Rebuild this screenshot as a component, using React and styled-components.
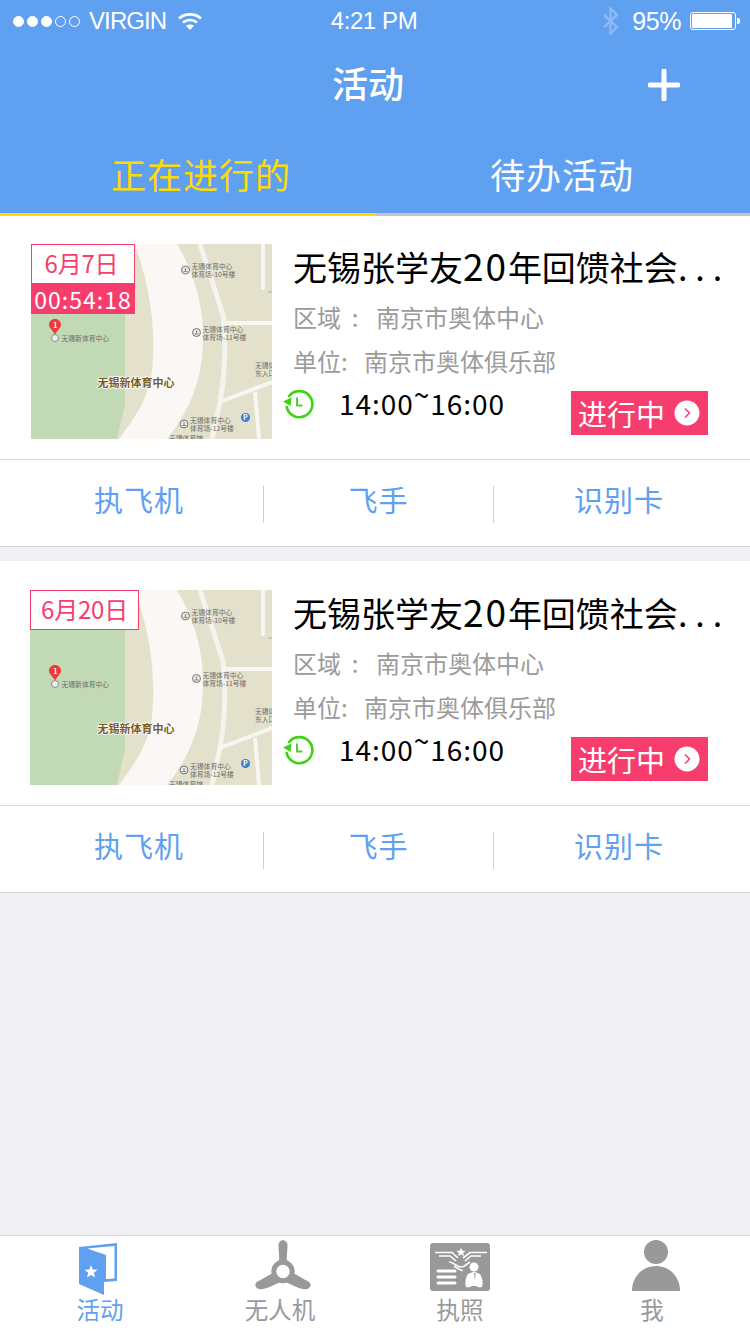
import React from "react";
import styled, { createGlobalStyle } from "styled-components";

const CJK = `"Noto Sans CJK SC", "Liberation Sans", sans-serif`;
const Global = createGlobalStyle`
  html, body { margin: 0; padding: 0; background: #efeff4; }
  body { font-family: ${CJK}; }
`;
const Page = styled.div`
  width: 750px; height: 1334px; display: flex; flex-direction: column; background: #efeff4; overflow: hidden;
`;
const Header = styled.header`
  background: #5fa0f1; height: 213px; display: flex; flex-direction: column; color: #fff;
`;
const StatusBar = styled.div`
  height: 42px; display: grid; grid-template-columns: 1fr auto 1fr; align-items: center; padding: 0 14px 0 13px;
  font: 25px/42px "Liberation Sans", sans-serif;
`;
const StatusLeft = styled.div`display: flex; align-items: center;`;
const StatusRight = styled.div`display: flex; align-items: center; justify-content: flex-end;`;
const Dots = styled.div`display: flex; gap: 3px; margin-right: 9px;`;
const Dot = styled.span`
  width: 11px; height: 11px; border-radius: 50%; box-sizing: border-box; border: 1px solid #fff;
  background: ${p => (p.$on ? "#fff" : "transparent")};
`;
const Carrier = styled.span`margin-right: 12px; font-size: 24px; letter-spacing: -.9px;`;
const Clock = styled.span`font-size: 24px; letter-spacing: -.4px; margin-right: 1px;`;
const Percent = styled.span`margin: 0 9px 0 11px; font-size: 25px; letter-spacing: -.4px;`;
const Battery = styled.div`
  width: 46px; height: 18px; border: 1px solid #fff; border-radius: 3px; box-sizing: border-box; padding: 1px; position: relative;
  &::after { content: ""; position: absolute; right: -5px; top: 5px; width: 3px; height: 6px; background: #fff; border-radius: 0 2px 2px 0; }
`;
const BatteryFill = styled.div`height: 100%; background: #fff; border-radius: 1px; width: 95%;`;
const NavBar = styled.div`
  height: 84px; position: relative; display: flex; align-items: center; justify-content: center;
  font-size: 36px; font-weight: 500; line-height: 80px; padding: 0 14px 4px 0; box-sizing: border-box;
`;
const Plus = styled.svg`position: absolute; right: 70px; top: 27px;`;
const Tabs = styled.nav`display: grid; grid-template-columns: 402px 1fr; height: 87px;`;
const Tab = styled.div`
  display: flex; justify-content: center; align-items: center; font-size: 35px; padding: 8px ${p => p.$pr || 0}px 0 0; box-sizing: border-box;
  color: ${p => (p.$active ? "#fbdc04" : "#fff")}; letter-spacing: 1px;
`;
const Indicator = styled.div`height: 3px; display: flex; background: #c6c6c8;`;
const IndicatorOn = styled.div`width: 376px; background: #fbdc04;`;
const List = styled.main`flex: 1; display: flex; flex-direction: column; gap: 14px;`;
const Card = styled.article`background: #fff; border-bottom: 1px solid #d2d2d2;`;
const CardBody = styled.div`
  height: ${p => 216 + p.$top}px; box-sizing: border-box; padding: ${p => p.$top}px 0 0 ${p => p.$left}px; display: flex; border-bottom: 1px solid #d6d6d6;
`;
const MapWrap = styled.div`position: relative; height: 195px; width: ${p => 272 - p.$left}px; flex: none; overflow: hidden;`;
const DateBadge = styled.div`
  position: absolute; left: 0; top: 0; display: flex; flex-direction: column; width: ${p => p.$w}px;
`;
const DateText = styled.div`
  height: 40px; box-sizing: border-box; border: 1px solid #f73d6e; background: #fff; color: #f73d6e; font-size: 24px; line-height: 36px;
  text-align: center; padding-right: ${p => p.$pr || 0}px; letter-spacing: -.2px;
`;
const Countdown = styled.div`
  height: 30px; background: #f73d6e; color: #fff; font: 23px/30px "Noto Sans CJK SC", sans-serif; letter-spacing: 1px; text-align: center; white-space: nowrap;
`;
const Info = styled.div`flex: 1; min-width: 0; padding-left: 21px; position: relative;`;
const Title = styled.h2`
  margin: -4px 0 0; height: 55px; font-size: 34px; font-weight: 400; color: #000; line-height: 50px; white-space: nowrap;
`;
const Digits = styled.span`font-size: 37px; letter-spacing: 1.9px;`;
const Ellipsis = styled.span`letter-spacing: 8px;`;
const Meta = styled.div`
  font-size: 24px; color: #9b9b9b; line-height: 44px; white-space: pre;
`;
const MetaLabel = styled.span`display: inline-block; width: ${p => p.$w}px;`;
const TimeRow = styled.div`display: flex; align-items: center; height: 44px; margin: -2px 0 0 -11px;`;
const TimeText = styled.span`
  font-size: 28px; line-height: 44px; color: #000; margin-left: 25px; letter-spacing: .95px; white-space: nowrap;
`;
const Tilde = styled.span`position: relative; top: -9px;`;
const StatusBadge = styled.div`
  position: absolute; left: 299px; top: 147px; width: 137px; height: 44px; background: #f73d6e; color: #fff; display: flex; align-items: center;
  padding-left: 7px; box-sizing: border-box; font-size: 29px; line-height: 42px; gap: 9px;
`;
const Go = styled.svg`flex: none;`;
const Actions = styled.div`display: grid; grid-template-columns: 263px 1px 229px 1px 1fr; height: 86px; align-items: center;`;
const Action = styled.div`
  color: #5fa0f1; font-size: 29px; text-align: center; letter-spacing: 1px; padding: 0 ${p => p.$pr || 0}px 8px ${p => p.$pl || 0}px; line-height: 76px;
`;
const Sep = styled.div`height: 37px; margin-top: 2px; background: #cfcfcf;`;
const TabBar = styled.footer`
  height: 99px; background: #fff; border-top: 1px solid #d8d8d8; display: grid; grid-template-columns: 200px 160px 200px 184px; box-sizing: border-box;
`;
const TabItem = styled.div`
  display: flex; flex-direction: column; align-items: center; padding-top: 4px; color: ${p => (p.$active ? "#5fa0f1" : "#999")};
`;
const TabIconBox = styled.div`
  height: 54px; box-sizing: border-box; display: flex; align-items: flex-start; justify-content: center;
  margin-left: ${p => p.$ml || 0}px; padding-top: ${p => p.$pt || 0}px;
`;
const TabLabel = styled.div`font-size: 23.5px; line-height: 30px;`;

const Wifi = () => (
  <svg width="24" height="18" viewBox="0 0 24 18" fill="none" stroke="#fff" strokeWidth="2.6">
    <path d="M1 6.5C7 1 17 1 23 6.5" />
    <path d="M5 10.5c4-3.4 10-3.4 14 0" />
    <path d="M12 18l-4-4.3c2.3-1.7 5.7-1.700 8 0z" fill="#fff" stroke="none" />
  </svg>
);
const Bluetooth = () => (
  <svg width="20" height="28" viewBox="0 0 20 28" fill="none" stroke="#8fbaf2" strokeWidth="2.4">
    <path d="M3 8l13 12-6.5 6.5V1.500L16 8 3 20" />
  </svg>
);
const Poi = ({ x, y, a, b }) => (
  <g>
    <circle cx={x} cy={y} r="4" fill="#e6e6e0" stroke="#777" strokeWidth="1" />
    <path d={`M${x - 2} ${y + 1.5}h4M${x} ${y - 2}v3`} stroke="#777" strokeWidth=".8" />
    <text x={x + 6} y={y - 1} fontSize="6.800" fill="#6a6a6a" fontFamily={CJK}>{a}</text>
    <text x={x + 6} y={y + 7} fontSize="6.800" fill="#6a6a6a" fontFamily={CJK}>{b}</text>
  </g>
);
const MapPicture = ({ offset }) => (
  <svg width={241 + offset} height="195" viewBox={`${-offset} 0 ${241 + offset} 195`} style={{ display: "block" }}>
    <rect x={-offset} width={241 + offset} height="195" fill="#e3e1cc" />
    <path d={`M${-offset} 0H94V160L86 195H${-offset}z`} fill="#c1dab5" />
    <path d="M104 0H146C165 32 176 72 171 112C168 148 150 178 136 195H88C108 168 122 148 122 110C124 62 112 25 104 0z" fill="#faf7f4" />
    <path d="M169 0L192 71C195 100 195 125 189 158L181 195" fill="none" stroke="#f4f3ee" strokeWidth="5" />
    <path d="M192 79H241M189 158L241 138M224 148L228 195" fill="none" stroke="#f6f6f2" strokeWidth="4" />
    <path d="M232 0V44" fill="none" stroke="#f6f6f2" strokeWidth="4" strokeLinecap="round" />
    <path d="M237 48h4" stroke="#aaa" strokeWidth="1" />
    <Poi x={154.500} y={26} a="无锡体育中心" b="体育场-10号楼" />
    <Poi x={165.500} y={88.500} a="无锡体育中心" b="体育场-11号楼" />
    <Poi x={153} y={180} a="无锡体育中心" b="体育场-12号楼" />
    <text x={224} y={124} fontSize="6.800" fill="#6a6a6a" fontFamily={CJK}>无锡体</text>
    <text x={224} y={132} fontSize="6.800" fill="#6a6a6a" fontFamily={CJK}>东入口</text>
    <circle cx="214.500" cy="173.500" r="4.500" fill="#3d7fd0" />
    <text x="212" y="176" fontSize="7" fontWeight="700" fill="#fff" fontFamily={CJK}>P</text>
    <text x={138} y={197} fontSize="6.800" fill="#6a6a6a" fontFamily={CJK}>无锡体育馆</text>
    <text x={66.500} y={143} fontSize="11" fontWeight="700" fill="#7a5a1e" stroke="#fff" strokeWidth="1.500" paintOrder="stroke" fontFamily={CJK}>无锡新体育中心</text>
    <path d="M24 75c-3.400 0-6 2.500-6 5.800 0 3.600 4.300 5.700 6 10.200 1.700-4.500 6-6.600 6-10.200 0-3.300-2.600-5.800-6-5.800z" fill="#ee3a3a" />
    <text x="22.200" y="83.500" fontSize="7" fontWeight="700" fill="#fff" fontFamily={CJK}>1</text>
    <circle cx="24" cy="94" r="3.500" fill="#eee" stroke="#777" strokeWidth=".8" />
    <text x={30.500} y={96.500} fontSize="6.800" fill="#6a6a6a" fontFamily={CJK}>无锡新体育中心</text>
  </svg>
);
const ClockBack = () => (
  <svg width="32" height="32" viewBox="0 0 32 32" fill="none">
    <path d="M6.500 10A13 13 0 1 1 4.500 19" stroke="#3ed315" strokeWidth="2.600" />
    <path d="M1 14.500L9.500 10.500L8.500 19z" fill="#3ed315" />
    <path d="M15 10.500V18.500H20.500" stroke="#58c83c" strokeWidth="2" />
  </svg>
);
const GoIcon = () => (
  <Go width="26" height="26" viewBox="0 0 26 26">
    <circle cx="13" cy="13" r="12.500" fill="#fff" />
    <path d="M11 8.500L15.500 13L11 17.500" fill="none" stroke="#f73d6e" strokeWidth="1.500" />
  </Go>
);
const DoorIcon = () => (
  <svg width="38" height="52" viewBox="0 0 38 52">
    <path fillRule="evenodd" d="M0 4L38 0V38L25 39V52L0 41zM8 5.500L27 12V36L35.500 35.500V3z" fill="#5fa0f1" />
    <path d="M12 22l1.800 4.500 4.700.3-3.600 3 1.200 4.700-4.100-2.600-4 2.600 1.200-4.700-3.700-3 4.800-.3z" fill="#fff" />
  </svg>
);
const FanIcon = () => (
  <svg width="58" height="52" viewBox="0 0 58 52" fill="#999">
    <path d="M23.500 5c0-6.500 9-6.500 9 0 0 6-1 10-.5 16h-8c.5-6-.5-10-.5-16z" />
    <path d="M19 33C13 35 8 39 3.500 41 0 42.500-1 46 2.500 48.500c5 3 15-3 22-6z" />
    <path d="M37 33c6 2 11 6 15.500 8 3.500 1.500 4.500 5 1 7.500-5 3-15-3-22-6z" />
    <circle cx="28" cy="31.500" r="9.200" fill="#fff" stroke="#999" strokeWidth="5" />
  </svg>
);
const LicenseIcon = () => (
  <svg width="60" height="48" viewBox="0 0 60 48">
    <rect width="60" height="48" rx="3" fill="#999" />
    <path d="M31 4.500l1.300 3.200 3.500.1-2.700 2.100 1 3.400-3.100-2-3 2 1-3.400-2.700-2.100 3.500-.1z" fill="#fff" />
    <g fill="none" stroke="#fff" strokeWidth="1.600">
      <path d="M5 9.500H22L28 15" /><path d="M9 13H20L26 18" /><path d="M57 9.500H40L33 15" /><path d="M51 13H41L35 18" />
      <path d="M19 19c5 0 7 5 12 5 5 0 6-4 9-5" /><path d="M24 23.500c3 .5 5 4 9 4" />
    </g>
    <path d="M8 28H25M8 34H25M8 40H25" stroke="#fff" strokeWidth="3" strokeLinecap="round" />
    <circle cx="44" cy="24" r="4.500" fill="#fff" />
    <path d="M38 31l5-2h2l5 2c3 5 3 9 2 13-2 .5-4 .5-6-1h-4c-2 1.500-4 1.500-6 1-1-4-1-8 2-13z" fill="#fff" />
    <path d="M44 30h1.500L45 38z" fill="#999" />
  </svg>
);
const PersonIcon = () => (
  <svg width="48" height="52" viewBox="0 0 48 52" fill="#999">
    <circle cx="24" cy="12" r="12" />
    <path d="M0 51C0 37 10 26 24 26s24 11 24 25z" />
  </svg>
);

const Activity = ({ date, dateW, datePr, countdown, left, top }) => (
  <Card>
    <CardBody $left={left} $top={top}>
      <MapWrap $left={left}>
        <MapPicture offset={31 - left} />
        <DateBadge $w={dateW}>
          <DateText $pr={datePr}>{date}</DateText>
          {countdown && <Countdown>{countdown}</Countdown>}
        </DateBadge>
      </MapWrap>
      <Info>
        <Title>无锡张学友<Digits>20</Digits>年回馈社会<Ellipsis>...</Ellipsis></Title>
        <Meta><MetaLabel $w={83}>{"区域  :"}</MetaLabel>南京市奥体中心</Meta>
        <Meta><MetaLabel $w={71}>单位:</MetaLabel>南京市奥体俱乐部</Meta>
        <TimeRow>
          <ClockBack />
          <TimeText>14:00<Tilde>~</Tilde>16:00</TimeText>
        </TimeRow>
        <StatusBadge>进行中<GoIcon /></StatusBadge>
      </Info>
    </CardBody>
    <Actions>
      <Action $pl={15}>执飞机</Action>
      <Sep />
      <Action>飞手</Action>
      <Sep />
      <Action $pr={6}>识别卡</Action>
    </Actions>
  </Card>
);

export default function App() {
  return (
    <Page>
      <Global />
      <Header>
        <StatusBar>
          <StatusLeft>
            <Dots>{[1, 1, 1, 0, 0].map((on, i) => <Dot key={i} $on={!!on} />)}</Dots>
            <Carrier>VIRGIN</Carrier>
            <Wifi />
          </StatusLeft>
          <Clock>4:21 PM</Clock>
          <StatusRight>
            <Bluetooth />
            <Percent>95%</Percent>
            <Battery><BatteryFill /></Battery>
          </StatusRight>
        </StatusBar>
        <NavBar>
          活动
          <Plus width="32" height="32" viewBox="0 0 32 32"><path d="M16 2V30M2 16H30" stroke="#fff" strokeWidth="5" strokeLinecap="round" /></Plus>
        </NavBar>
        <Tabs>
          <Tab $active>正在进行的</Tab>
          <Tab $pr={28}>待办活动</Tab>
        </Tabs>
      </Header>
      <Indicator><IndicatorOn /></Indicator>
      <List>
        <Activity date="6月7日" dateW={104} datePr={3} countdown="00:54:18" left={31} top={28} />
        <Activity date="6月20日" dateW={109} left={30} top={29} />
      </List>
      <TabBar>
        <TabItem $active><TabIconBox $ml={-4} $pt={3}><DoorIcon /></TabIconBox><TabLabel>活动</TabLabel></TabItem>
        <TabItem><TabIconBox $ml={7}><FanIcon /></TabIconBox><TabLabel>无人机</TabLabel></TabItem>
        <TabItem><TabIconBox $pt={3}><LicenseIcon /></TabIconBox><TabLabel>执照</TabLabel></TabItem>
        <TabItem><TabIconBox $ml={8}><PersonIcon /></TabIconBox><TabLabel>我</TabLabel></TabItem>
      </TabBar>
    </Page>
  );
}
